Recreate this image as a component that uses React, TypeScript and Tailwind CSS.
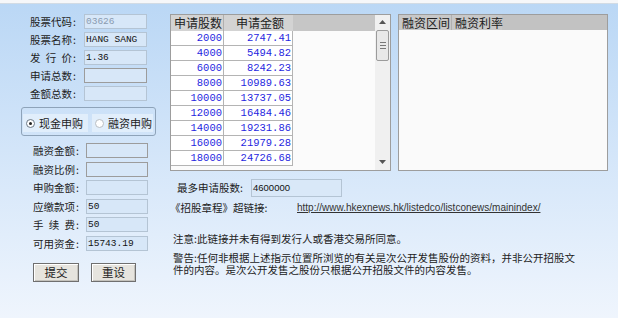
import React from 'react';

const cjk = "font-['Noto_Sans_CJK_SC',sans-serif]";
const mono = "font-['Liberation_Mono',monospace]";

const quotes: [string, string][] = [
  ['2000', '2747.41'],
  ['4000', '5494.82'],
  ['6000', '8242.23'],
  ['8000', '10989.63'],
  ['10000', '13737.05'],
  ['12000', '16484.46'],
  ['14000', '19231.86'],
  ['16000', '21979.28'],
  ['18000', '24726.68'],
];

function Label({ text, width }: { text: string; width: string }) {
  // spaced labels like "发 行 价" are spread over four character widths
  const chars = text.split(' ');
  return (
    <div className={`flex items-center ${width} text-[10.5px] leading-[15px] text-[#222]`}>
      {chars.length > 1 ? (
        <span className="flex w-[42px] justify-between">
          {chars.map((c) => (
            <span key={c}>{c}</span>
          ))}
        </span>
      ) : (
        <span>{text}</span>
      )}
      <span className="ml-[1px]">:</span>
    </div>
  );
}

function Box({ value, dim, dark, w }: { value?: string; dim?: boolean; dark?: boolean; w: string }) {
  return (
    <div
      className={`h-[15px] ${w} border ${
        dark ? 'border-[#9c9c9c]' : 'border-[#b4c4d4]'
      } bg-[#d7e7f8] pl-[1px] text-[9.5px] leading-[13px] ${mono} ${dim ? 'text-[#8a9bb0]' : 'text-[#111]'}`}
    >
      {value}
    </div>
  );
}

function Radio({ label, checked, w }: { label: string; checked?: boolean; w: string }) {
  return (
    <div className={`flex h-[18px] ${w} items-center gap-[4px] whitespace-nowrap bg-[#e1eefb] pl-[3px]`}>
      <span
        className={`flex h-[9px] w-[9px] shrink-0 items-center justify-center rounded-full border bg-white ${
          checked ? 'border-[#6c7a88]' : 'border-[#b8bec4]'
        }`}
      >
        {checked && <span className="h-[3px] w-[3px] rounded-full bg-[#222]" />}
      </span>
      <span className="text-[11px] leading-[18px] text-[#222]">{label}</span>
    </div>
  );
}

function Button({ label, w }: { label: string; w: string }) {
  return (
    <button
      className={`h-[19px] ${w} border border-[#6f6f6f] bg-[#e6e4de] text-[11.5px] leading-[17px] text-[#222] shadow-[inset_1px_1px_0_#fff,inset_-1px_-1px_0_#c4c2bc]`}
    >
      {label}
    </button>
  );
}

function ScrollBar() {
  return (
    <div className="flex w-[15px] flex-col items-center bg-[#f0f0f0]">
      <svg width="7" height="4" viewBox="0 0 7 4" className="mt-[5px]">
        <path d="M3.5 0 L7 4 L0 4 Z" fill="#555" />
      </svg>
      <div className="mt-[6px] flex h-[31px] w-[13px] flex-col items-center justify-center gap-[2px] rounded-[2px] border border-[#9b9b9b] bg-[#e8e8e8]">
        <span className="h-px w-[6px] bg-[#777]" />
        <span className="h-px w-[6px] bg-[#777]" />
        <span className="h-px w-[6px] bg-[#777]" />
      </div>
      <svg width="7" height="4" viewBox="0 0 7 4" className="mt-auto mb-[6px]">
        <path d="M0 0 L7 0 L3.5 4 Z" fill="#555" />
      </svg>
    </div>
  );
}

export default function App() {
  return (
    <div className={`h-[318px] w-[618px] overflow-hidden bg-gradient-to-b from-[#bad7f5] to-[#eff5fd] ${cjk}`}>
      <div className="h-[4px] border-b border-[#d2dbe4] bg-[#f6f7f9]" />
      <div className="flex">
        {/* Left form */}
        <div className="w-[170px] shrink-0">
          <div className="mt-[10px] flex flex-col gap-[3px] pl-[30px]">
            <div className="flex">
              <Label text="股票代码" width="w-[54px]" />
              <Box value="03626" dim w="w-[63px]" />
            </div>
            <div className="flex">
              <Label text="股票名称" width="w-[54px]" />
              <Box value="HANG SANG" w="w-[63px]" />
            </div>
            <div className="flex">
              <Label text="发 行 价" width="w-[54px]" />
              <Box value="1.36" w="w-[63px]" />
            </div>
            <div className="flex">
              <Label text="申请总数" width="w-[54px]" />
              <Box dark w="w-[63px]" />
            </div>
            <div className="flex">
              <Label text="金额总数" width="w-[54px]" />
              <Box w="w-[63px]" />
            </div>
          </div>

          <div className="ml-[21px] mt-[6px] flex h-[29px] w-[135px] gap-[4px] rounded-[3px] border border-[#8ea3b9] px-[1px] pt-[6px]">
            <Radio label="现金申购" checked w="w-[65px]" />
            <Radio label="融资申购" w="w-[61px]" />
          </div>

          <div className="mt-[7px] flex flex-col gap-[3.5px] pl-[33px]">
            <div className="flex">
              <Label text="融资金额" width="w-[53px]" />
              <Box dark w="w-[62px]" />
            </div>
            <div className="flex">
              <Label text="融资比例" width="w-[53px]" />
              <Box dark w="w-[62px]" />
            </div>
            <div className="flex">
              <Label text="申购金额" width="w-[53px]" />
              <Box w="w-[62px]" />
            </div>
            <div className="flex">
              <Label text="应缴款项" width="w-[53px]" />
              <Box value="50" w="w-[62px]" />
            </div>
            <div className="flex">
              <Label text="手 续 费" width="w-[53px]" />
              <Box value="50" w="w-[62px]" />
            </div>
            <div className="flex">
              <Label text="可用资金" width="w-[53px]" />
              <Box value="15743.19" w="w-[62px]" />
            </div>
          </div>

          <div className="ml-[33px] mt-[12px] flex gap-[12px]">
            <Button label="提交" w="w-[46px]" />
            <Button label="重设" w="w-[45px]" />
          </div>
        </div>

        {/* Right side */}
        <div className="flex-1">
          <div className="mt-[10px] flex">
            {/* Subscription table */}
            <div className="flex h-[157px] w-[221px] border border-[#9d9d9d] bg-[#fbfbfb]">
              <div className="flex-1">
                <div className="flex h-[16px] whitespace-nowrap bg-[#c6c6c6] text-[12px] leading-[16px] text-[#222]">
                  <div className="w-[53px] border-r border-[#b0b0b0] bg-[#d3d3d3] pl-[3px]">申请股数</div>
                  <div className="w-[69px] bg-[#d3d3d3] pl-[12px]">申请金额</div>
                </div>
                {quotes.map(([shares, amount]) => (
                  <div key={shares} className={`flex h-[15px] text-[10.5px] leading-[14px] text-[#1f1fe0] ${mono}`}>
                    <div className="w-[53px] border-b border-r border-[#b4b4b4] bg-white pr-[1px] text-right">
                      {shares}
                    </div>
                    <div className="w-[69px] border-b border-r border-[#b4b4b4] bg-white pr-[1px] text-right">
                      {amount}
                    </div>
                  </div>
                ))}
              </div>
              <ScrollBar />
            </div>

            {/* Financing table */}
            <div className="ml-[7px] h-[157px] w-[210px] border border-[#9d9d9d] bg-[#fafafa]">
              <div className="flex h-[15px] whitespace-nowrap bg-[#c2c2c2] text-[12px] leading-[15px] text-[#222]">
                <div className="w-[53px] border-r border-[#b0b0b0] bg-[#c8c8c8] pl-[3px]">融资区间</div>
                <div className="w-[50px] bg-[#c8c8c8] pl-[3px]">融资利率</div>
              </div>
            </div>
          </div>

          <div className="mt-[8px] flex items-center pl-[7px]">
            <div className="w-[74px] text-[10.5px] leading-[18px] text-[#222]">最多申请股数:</div>
            <div className="h-[18px] w-[91px] border border-[#b4c4d4] bg-[#d9e8f8] pl-[1px] font-['Liberation_Sans',sans-serif] text-[9.5px] leading-[15px] text-[#111]">
              4600000
            </div>
          </div>

          <div className="mt-[4px] flex items-center">
            <div className="w-[127px] text-[10.5px] leading-[14px] text-[#222]">《招股章程》超链接:</div>
            <div className="whitespace-nowrap font-['Liberation_Sans',sans-serif] text-[10px] leading-[14px] text-[#333] underline">
              http://www.hkexnews.hk/listedco/listconews/mainindex/
            </div>
          </div>

          <div className="mt-[17px] pl-[3px] text-[10.5px] leading-[14px] text-[#222]">
            注意:此链接并未有得到发行人或香港交易所同意。
          </div>

          <div className="mt-[6px] whitespace-nowrap pl-[3px] text-[10.5px] leading-[12px] text-[#222]">
            警告:任何非根据上述指示位置所浏览的有关是次公开发售股份的资料，并非公开招股文
            <br />
            件的内容。是次公开发售之股份只根据公开招股文件的内容发售。
          </div>
        </div>
      </div>
    </div>
  );
}
